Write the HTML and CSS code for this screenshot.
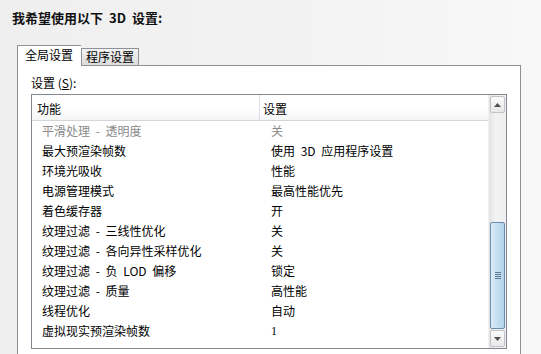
FILE: index.html
```html
<!DOCTYPE html>
<html lang="zh-CN">
<head>
<meta charset="utf-8">
<link rel="stylesheet" href="styles.css">
</head>
<body>
<div class="page">
  <h1 class="title">我希望使用以下<span class="lat"> 3D </span>设置:</h1>
  <div class="tabs">
    <div class="tab active">全局设置</div>
    <div class="tab">程序设置</div>
  </div>
  <div class="panel">
    <div class="label">设置 (<u>S</u>):</div>
    <div class="listbox">
      <div class="list">
        <div class="head">
          <div class="hc first">功能</div>
          <div class="hc">设置</div>
        </div>
        <div class="row dim"><span class="c1">平滑处理<span class="lat"> - </span>透明度</span><span class="c2">关</span></div>
        <div class="row"><span class="c1">最大预渲染帧数</span><span class="c2">使用<span class="lat"> 3D </span>应用程序设置</span></div>
        <div class="row"><span class="c1">环境光吸收</span><span class="c2">性能</span></div>
        <div class="row"><span class="c1">电源管理模式</span><span class="c2">最高性能优先</span></div>
        <div class="row"><span class="c1">着色缓存器</span><span class="c2">开</span></div>
        <div class="row"><span class="c1">纹理过滤<span class="lat"> - </span>三线性优化</span><span class="c2">关</span></div>
        <div class="row"><span class="c1">纹理过滤<span class="lat"> - </span>各向异性采样优化</span><span class="c2">关</span></div>
        <div class="row"><span class="c1">纹理过滤<span class="lat"> - </span>负<span class="lat"> LOD </span>偏移</span><span class="c2">锁定</span></div>
        <div class="row"><span class="c1">纹理过滤<span class="lat"> - </span>质量</span><span class="c2">高性能</span></div>
        <div class="row"><span class="c1">线程优化</span><span class="c2">自动</span></div>
        <div class="row"><span class="c1">虚拟现实预渲染帧数</span><span class="c2 num">1</span></div>
      </div>
      <div class="scrollbar">
        <div class="sbtn up"><svg width="7" height="4" viewBox="0 0 7 4"><path d="M0 4 L3.5 0 L7 4 Z" fill="#4d5157"/></svg></div>
        <div class="track">
          <div class="thumb-space-top"></div>
          <div class="thumb">
            <div class="grip"><i></i><i></i><i></i><i></i></div>
          </div>
          <div class="thumb-space-bottom"></div>
        </div>
        <div class="sbtn down"><svg width="7" height="4" viewBox="0 0 7 4"><path d="M0 0 L7 0 L3.5 4 Z" fill="#4d5157"/></svg></div>
      </div>
    </div>
  </div>
</div>
</body>
</html>
```
FILE: styles.css
```css
html, body {
  margin: 0;
  padding: 0;
  height: 354px;
  overflow: hidden;
}
body {
  background: linear-gradient(to right, #efefef 0%, #f3f3f3 60%, #f8f8f8 100%);
  font-family: "Noto Sans CJK SC", "Noto Sans", sans-serif;
  font-size: 12px;
  color: #000;
}
.page {
  padding: 0 0 0 17px;
}
.title {
  margin: 0 0 0 -5px;
  padding-top: 10px;
  height: 18px;
  font-size: 13px;
  line-height: 16px;
  font-weight: bold;
  color: #111;
}
.lat {
  white-space: pre;
  word-spacing: 3px;
}
.tabs {
  display: flex;
  align-items: flex-end;
  margin-top: 17px;
  height: 20px;
  position: relative;
  z-index: 2;
}
.tab {
  box-sizing: border-box;
  height: 17px;
  border: 1px solid #8e9298;
  border-bottom: none;
  background: linear-gradient(#f2f2f2, #dcdcdc);
  padding: 0 4px 0 4px;
  line-height: 15px;
  font-size: 12px;
}
.tab.active {
  height: 21px;
  margin-bottom: -1px;
  background: #fff;
  padding: 0 8px 0 7px;
  line-height: 18px;
  border-right: none;
}
.panel {
  box-sizing: border-box;
  width: 504px;
  height: 320px;
  border: 1px solid #8e9298;
  background: #fff;
  padding: 9px 13px 0 13px;
}
.label {
  height: 16px;
  line-height: 16px;
  margin-bottom: 3px;
}
.label u {
  text-decoration: underline;
}
.listbox {
  box-sizing: border-box;
  height: 255px;
  border: 1px solid #828790;
  display: flex;
  background: #fff;
}
.list {
  flex: 1;
}
.head {
  display: flex;
  height: 25px;
  border-bottom: 1px solid #d5d5d5;
  background: linear-gradient(#ffffff 0%, #ffffff 55%, #f4f5f7 100%);
}
.hc {
  padding-top: 3px;
  line-height: 22px;
  padding-left: 5px;
}
.hc.first {
  width: 222px;
  border-right: 1px solid #dedfe2;
}
.hc + .hc {
  padding-left: 3px;
}
.row {
  display: flex;
  height: 20px;
  line-height: 20px;
}
.row .c1 {
  width: 218px;
  padding-left: 10px;
}
.row .c2 {
  padding-left: 11px;
}
.row.dim {
  color: #8a8a8a;
}
.num {
  font-family: "Liberation Serif", serif;
}
.scrollbar {
  width: 17px;
  display: flex;
  flex-direction: column;
  background: linear-gradient(to right, #e4e4e4, #f3f3f3 40%, #eeeeee);
  border-left: 1px solid #f0f0f0;
}
.sbtn {
  box-sizing: border-box;
  height: 17px;
  margin: 1px;
  border: 1px solid #c2c3c9;
  border-radius: 2px;
  background: linear-gradient(#fbfbfb, #e8e8e8);
  display: flex;
  align-items: center;
  justify-content: center;
}
.track {
  flex: 1;
  display: flex;
  flex-direction: column;
}
.thumb-space-top {
  height: 108px;
}
.thumb {
  box-sizing: border-box;
  height: 107px;
  margin: 0 1px;
  border: 1px solid #6c8cab;
  border-radius: 2px;
  background: linear-gradient(to right, #dbeefa, #c3def1 50%, #b3d4ec);
  display: flex;
  align-items: center;
  justify-content: center;
}
.thumb-space-bottom {
  flex: 1;
}
.grip {
  display: flex;
  flex-direction: column;
  gap: 1px;
}
.grip i {
  display: block;
  width: 6px;
  height: 1px;
  background: #5c7a98;
}
```
